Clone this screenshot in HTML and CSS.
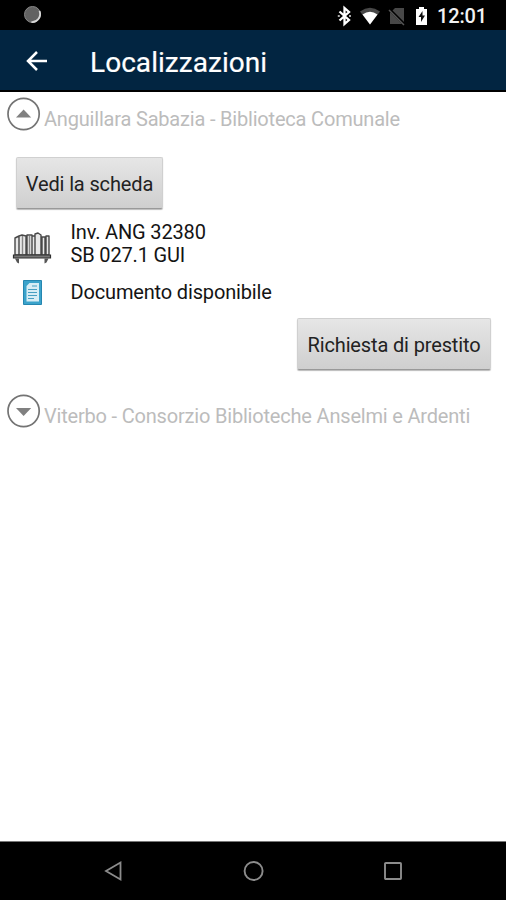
FILE: index.html
```html
<!DOCTYPE html>
<html lang="it">
<head>
<meta charset="utf-8">
<title>Localizzazioni</title>
<link rel="stylesheet" href="styles.css">
</head>
<body>
<div class="status">
  <svg class="spinner" width="20" height="20" viewBox="0 0 20 20"><circle cx="9.500" cy="9.500" r="8" fill="#626262" stroke="#888"/><path d="M16.500 6A8 8 0 0 1 8.500 17" fill="none" stroke="#d8d8d8" stroke-width="1.800"/></svg>
  <svg class="icons" width="92" height="24" viewBox="0 0 92 24">
    <path d="M2.500 7.500L12 16 7.500 20V4L12 8 2.500 16.500" fill="none" stroke="#fff" stroke-width="2.300"/>
    <path d="M0.800 12h2M12 12h2" stroke="#aaa" stroke-width="1.800"/>
    <path d="M23 7.400Q33 .2 43 7.400L33 20.500Z" fill="#484848"/>
    <path d="M25.500 10.500Q33 5 40.500 10.500L33 20.500Z" fill="#fff"/>
    <path d="M53 9L58 4h9v16H53Z" fill="#484848"/>
    <path d="M51 4L68 21" stroke="#000" stroke-width="3"/><path d="M52 6L67 21" stroke="#555" stroke-width="1.500"/>
    <path d="M79 5h3V3h5v2h3v16H79Z" fill="#fff"/>
    <path d="M85.500 7L81.500 13h2.500v5l4-6.500h-2.500Z" fill="#111"/>
  </svg>
  <span class="clock">12:01</span>
</div>
<header class="bar">
  <svg class="back" width="22" height="20" viewBox="0 0 22 20"><path d="M21 10H2M11 1L2 10l9 9" fill="none" stroke="#fff" stroke-width="2.500"/></svg>
  <h1 class="title">Localizzazioni</h1>
</header>
<main class="content">
  <section class="group">
    <svg class="toggle" width="34" height="34" viewBox="0 0 34 34"><circle cx="16.600" cy="17" r="15.600" fill="#fff" stroke="#747474" stroke-width="1.700"/><path d="M9 20.500L16.600 12.500 24.200 20.500Z" fill="#808080"/></svg>
    <h2 class="name">Anguillara Sabazia - Biblioteca Comunale</h2>
  </section>
  <button class="btn btn-card"><span>Vedi la scheda</span></button>
  <div class="row shelf">
    <svg class="books" width="40" height="34" viewBox="0 0 40 34">
      <g fill="#e8e8e8" stroke="#484848" stroke-width="1.400" stroke-linejoin="round">
        <path d="M3 7l4-2v19H3ZM7 5l3-1 4 1v19H7ZM15 4h5v20h-5ZM20 5h3v19h-3ZM23 3l3-1 3 2v20h-6ZM30 6h3v18h-3ZM34 5h3v19h-3Z"/>
        <path d="M10.500 5v18M17.500 5v18" stroke="#888"/>
      </g>
      <path d="M1.500 24H38.500V27H1.500Z" fill="#777" stroke="#303030" stroke-width="1.200"/>
      <path d="M3 27.500h4v5l-2-1ZM36.500 27.500h-4v5l2-1Z" fill="#555"/>
    </svg>
    <p class="text">Inv. ANG 32380<br>SB 027.1 GUI</p>
  </div>
  <div class="row avail">
    <svg class="doc" width="20" height="26" viewBox="0 0 20 26"><path d="M.5 .5h18v24H.5Z" fill="#3ba3cb" stroke="#2586b0"/><path d="M3.500 6l3-3H16v18.500H3.500Z" fill="#d7edf5"/><path d="M9 6h5M5 9.500h9M5 12.500h9M5 15.500h9M5 18.500h6" stroke="#479fc2" stroke-width="1.200"/></svg>
    <p class="text">Documento disponibile</p>
  </div>
  <button class="btn btn-loan"><span>Richiesta di prestito</span></button>
  <section class="group group-b">
    <svg class="toggle" width="34" height="34" viewBox="0 0 34 34"><circle cx="16.600" cy="17" r="15.600" fill="#fff" stroke="#747474" stroke-width="1.700"/><path d="M9 14h15.200L16.600 22Z" fill="#808080"/></svg>
    <h2 class="name">Viterbo - Consorzio Biblioteche Anselmi e Ardenti</h2>
  </section>
</main>
<nav class="nav">
  <svg width="20" height="22" viewBox="0 0 20 22"><path d="M16.500 2.500v17L2 11Z" fill="none" stroke="#8c8c8c" stroke-width="1.800"/></svg>
  <svg width="22" height="22" viewBox="0 0 22 22"><circle cx="10.600" cy="11" r="9" fill="none" stroke="#8c8c8c" stroke-width="1.900"/></svg>
  <svg width="20" height="20" viewBox="0 0 20 20"><rect x="2" y="2" width="16" height="16" rx=".8" fill="none" stroke="#8c8c8c" stroke-width="1.900"/></svg>
</nav>
</body>
</html>
```
FILE: styles.css
```css
* { box-sizing: border-box; }
body { margin: 0; height: 900px; display: flex; flex-direction: column; background: #fff; color: #141414; font: 20px/23px Roboto, "Liberation Sans", sans-serif; letter-spacing: -0.16px; overflow: hidden; }
svg { display: block; flex: none; }
h1, h2, p { margin: 0; font-weight: 400; white-space: nowrap; }
.status { height: 30px; background: #000; display: flex; align-items: center; padding-left: 23px; }
.icons { margin: 2px 0 0 294px; }
.clock { margin: 2px 0 0 8px; color: #f2f2f2; font-size: 20px; font-weight: 500; }
.bar { height: 62px; background: #022541; border-bottom: 2px solid #000; display: flex; align-items: center; padding-left: 26px; }
.back { margin-top: 2px; }
.title { margin: 6px 0 0 42px; color: #fff; font-size: 28px; line-height: 34px; letter-spacing: 0.05px; -webkit-text-stroke: 0.2px #fff; }
.content { flex: 1; display: flex; flex-direction: column; }
.group { display: flex; padding: 5px 0 0 7px; height: 65px; }
.name { margin: 11px 0 0 3px; font-size: 20px; line-height: 23px; color: #bcbcbc; letter-spacing: -0.19px; }
.btn { height: 52px; border: 1px solid #d0d0d0; border-bottom: 1px solid #999; border-radius: 2px; background: linear-gradient(#e6e6e6, #cfcfcf); box-shadow: 0 1px 1px #bbb; color: #222; font: inherit; letter-spacing: -0.14px; padding: 3px 0 0; white-space: nowrap; }
.btn-card { width: 147px; margin-left: 16px; }
.btn-loan { width: 194px; margin: 8px 15px 0 auto; }
.row { display: flex; }
.shelf { height: 61px; padding: 12px 0 0 12px; }
.books { margin-top: 10px; }
.shelf .text { margin: 0 0 0 18.5px; }
.avail { height: 40px; padding: 10px 0 0 23px; }
.avail .text { margin: 1px 0 0 27.5px; }
.group-b { margin-top: 19px; }
.nav { height: 59px; background: #000; border-top: 1px solid #777; display: flex; align-items: center; justify-content: space-between; padding: 0 103px 0 104px; }
```
